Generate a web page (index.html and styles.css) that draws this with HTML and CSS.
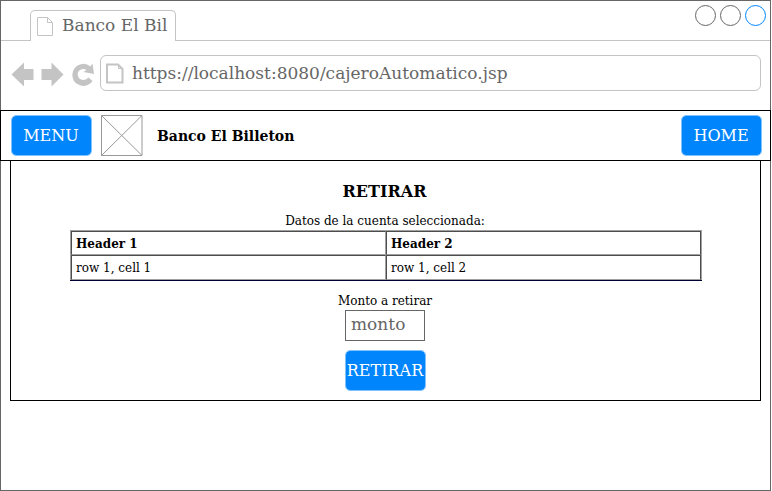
FILE: index.html
```html
<!DOCTYPE html>
<html lang="es">
<head>
<meta charset="utf-8">
<title>Banco El Billeton</title>
<link rel="stylesheet" href="styles.css">
</head>
<body>
<div class="window">
  <div class="titlebar">
    <div class="tab">
      <svg class="tab-icon" width="18" height="20" viewBox="0 0 18 20"><path d="M.5 .5H10.500L15.500 5.500V18.500H.5ZM10.500 .5V5.500H15.500" fill="none" stroke="#c4c4c4"/></svg>
      <span>Banco El Bil</span>
    </div>
    <div class="controls"><i></i><i></i><i class="active"></i></div>
  </div>
  <div class="toolbar">
    <svg class="nav" width="84" height="26" viewBox="0 0 84 26" fill="#c4c4c4">
      <path d="M.5 12.500 13 .5V7H22.500V18H13V24.500Z"/>
      <path d="M52.500 12.500 40.500 .5V7H30.500V18H40.500V24.500Z"/>
      <path d="M79.500 4.500 81.500 1.500 83 12 72.500 10 75.500 8Q73 6.500 70 7.500A5.500 5.500 0 0 0 72 18Q75 18 77.500 15.500L81.500 19A11 11 0 1 1 79.500 4.500Z"/>
    </svg>
    <div class="address">
      <svg width="18" height="21" viewBox="0 0 18 21" fill="none" stroke="#c4c4c4"><path d="M1 1.500H12L16.500 6V19.500H1Z" stroke-width="2"/><path d="M12.500 1.500V5.500H16.500"/></svg>
      <span>https://localhost:8080/cajeroAutomatico.jsp</span>
    </div>
  </div>
  <header class="bar">
    <button class="btn">MENU</button>
    <svg class="logo" width="42" height="41" viewBox="0 0 42 41" fill="none" stroke="#999"><path d="M.5 .5H41V40.500H.5Z"/><path d="M.5 .5 41 40.500M.5 40.500 41 .5"/></svg>
    <strong class="brand">Banco El Billeton</strong>
    <button class="btn home">HOME</button>
  </header>
  <main class="panel">
    <h1>RETIRAR</h1>
    <p class="caption">Datos de la cuenta seleccionada:</p>
    <div class="table-wrap">
      <table>
        <tr><th>Header 1</th><th>Header 2</th></tr>
        <tr><td>row 1, cell 1</td><td>row 1, cell 2</td></tr>
      </table>
    </div>
    <label class="caption" for="monto">Monto a retirar</label>
    <input id="monto" placeholder="monto">
    <button class="btn">RETIRAR</button>
  </main>
</div>
</body>
</html>
```
FILE: styles.css
```css
* { box-sizing: border-box; }
body { margin: 0; background: #fff; font-family: "DejaVu Serif", serif; }
.window { width: 771px; height: 491px; border: 1px solid #666; }
.titlebar { height: 40px; display: flex; align-items: flex-end; justify-content: space-between; border-bottom: 1px solid #c4c4c4; }
.tab { width: 146px; height: 31px; margin: 0 0 -1px 29px; padding-left: 6px; display: flex; border: 1px solid #c4c4c4; border-bottom: 0; border-radius: 5px 5px 0 0; background: #fff; color: #666; font-size: 17px; line-height: 29px; white-space: nowrap; }
.tab-icon { margin: 6px 7px 0 0; flex: none; }
.controls { display: flex; gap: 4px; align-self: flex-start; margin: 4px 4px 0 0; }
.controls i { width: 21px; height: 21px; border: 1px solid #666; border-radius: 50%; }
.controls .active { border-color: #0085fd; }
.toolbar { height: 69px; display: flex; padding: 14px 9px 0 10px; }
.nav { margin: 7px 5px 0 0; flex: none; }
.address { flex: 1; height: 36px; display: flex; border: 1px solid #c4c4c4; border-radius: 6px; padding-left: 5px; color: #666; font-size: 17px; line-height: 35px; }
.address svg { margin: 7px 8px 0 0; }
.bar { height: 51px; margin: 0 -1px; border: 1px solid #000; padding: 0 8px 0 10px; display: flex; align-items: center; }
.btn { width: 81px; height: 41px; margin: 0; padding: 0 1px 0 0; border: 1px solid #80c2fe; border-radius: 5px; background: #0085fd padding-box; color: #fff; font: 16px "DejaVu Serif", serif; white-space: nowrap; }
.logo { margin: 0 14px 0 9px; }
.brand { font-size: 14px; }
.home { margin-left: auto; }
.panel { width: 751px; height: 241px; margin: -1px 0 0 9px; border: 1px solid #000; display: flex; flex-direction: column; align-items: center; font-size: 12px; }
h1 { margin: 20px 2px 0 0; font: bold 16px/22px "DejaVu Serif", serif; }
.caption { margin: 9px 1px 0 0; line-height: 18px; }
.table-wrap { width: 632px; height: 51px; margin-left: 1px; border-bottom: 1px solid #000033; }
table { width: 632px; height: 50px; table-layout: fixed; border-collapse: separate; border-spacing: 0; border: solid #a0a0a0; border-width: 1px 1px 0; }
th, td { height: 24px; border: 1px solid; border-color: #4d4d4d #a0a0a0 #a0a0a0 #4d4d4d; padding: 0 4px; text-align: left; line-height: 22px; }
th { padding-top: 2px; line-height: 20px; }
td { height: 25px; }
th:last-child, td:last-child { border-right-color: #4d4d4d; }
label.caption { margin-top: 11px; }
input { width: 80px; height: 31px; margin: 0 1px 9px 0; padding: 0 5px 3px; border: 1px solid #666; font: 17px "DejaVu Serif", serif; }
input::placeholder { color: #666; }
```
